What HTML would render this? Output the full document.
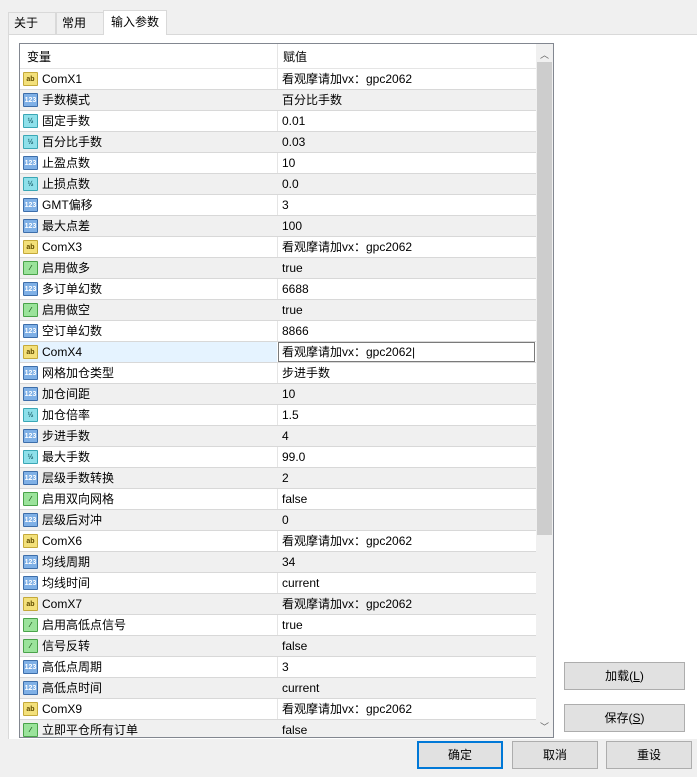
<!DOCTYPE html>
<html><head><meta charset="utf-8"><style>
*{box-sizing:border-box;margin:0;padding:0}
body{width:697px;height:777px;background:#f0f0f0;font-family:"Liberation Sans","Noto Sans CJK SC",sans-serif;font-size:12px;color:#000;position:relative;overflow:hidden}
.tab{position:absolute;top:12px;height:22px;border:1px solid #d9d9d9;border-bottom:none;background:#f0f0f0;padding:0 5px;line-height:21px;font-size:12px}
.panel{position:absolute;left:8px;top:34px;width:689px;height:705px;background:#fff;border-top:1px solid #d9d9d9;border-left:1px solid #d9d9d9}
.grid{position:absolute;left:19px;top:43px;width:535px;height:695px;border:1px solid #828790;background:#fff;overflow:hidden}
.hdr{position:absolute;left:0;top:0;width:516px;height:25px;border-bottom:1px solid #e5e5e5}
.hdr span{position:absolute;top:0;line-height:27px}
.row{position:absolute;left:0;width:516px;height:21px;border-bottom:1px solid #d8d8d8}
.row.g{background:#f0f0f0}
.row .n{position:absolute;left:22px;top:0;line-height:20px}
.row .v{position:absolute;left:262px;top:0;line-height:20px}
.row .ic{position:absolute;left:3px;top:3px;width:15px;height:14px;border-radius:1px;font-size:7px;line-height:13px;text-align:center;font-weight:bold}
.ab{background:#f3e07a;border:1px solid #c4a93a;color:#604c00}
.n1{background:#7fb0e6;border:1px solid #3d6eaa;color:#fff}
.hf{background:#8ee0ea;border:1px solid #3aa7b5;color:#1a5f6a}
.ch{background:#9be39b;border:1px solid #4aa34a;color:#145214}
.vline{position:absolute;left:257px;top:0;width:1px;height:695px;background:#e5e5e5}
.sb{position:absolute;left:516px;top:0;width:17px;height:693px;background:#f0f0f0}
.thumb{position:absolute;left:1px;top:18px;width:15px;height:473px;background:#cdcdcd}
.btn{position:absolute;height:28px;background:#e1e1e1;border:1px solid #adadad;text-align:center;line-height:26px;font-size:12px}
</style></head><body>
<div class="panel"></div>
<div class="tab" style="left:8px;width:48px">关于</div>
<div class="tab" style="left:56px;width:48px">常用</div>
<div class="tab" style="left:103px;top:10px;height:25px;width:64px;background:#fff;padding-left:7px;line-height:23px">输入参数</div>
<div class="grid">
<div class="hdr"><span style="left:7px">变量</span><span style="left:263px">赋值</span></div>
<div class="vline"></div>
<div id="rows"></div>
<div class="sb"><div style="position:absolute;left:4px;top:4px;font-size:9px;color:#606060">︿</div><div class="thumb"></div><div style="position:absolute;left:4px;top:676px;font-size:9px;color:#606060">﹀</div></div>
</div>
<div class="btn" style="left:564px;top:662px;width:121px">加载(<u>L</u>)</div>
<div class="btn" style="left:564px;top:704px;width:121px">保存(<u>S</u>)</div>
<div class="btn" style="left:417px;top:741px;width:86px;border:2px solid #0078d7;line-height:24px">确定</div>
<div class="btn" style="left:512px;top:741px;width:86px">取消</div>
<div class="btn" style="left:606px;top:741px;width:86px">重设</div>
<script>
var d=[["ab","ComX1","看观摩请加vx：gpc2062"],["n1","手数模式","百分比手数"],["hf","固定手数","0.01"],["hf","百分比手数","0.03"],["n1","止盈点数","10"],["hf","止损点数","0.0"],["n1","GMT偏移","3"],["n1","最大点差","100"],["ab","ComX3","看观摩请加vx：gpc2062"],["ch","启用做多","true"],["n1","多订单幻数","6688"],["ch","启用做空","true"],["n1","空订单幻数","8866"],["ab","ComX4","看观摩请加vx：gpc2062"],["n1","网格加仓类型","步进手数"],["n1","加仓间距","10"],["hf","加仓倍率","1.5"],["n1","步进手数","4"],["hf","最大手数","99.0"],["n1","层级手数转换","2"],["ch","启用双向网格","false"],["n1","层级后对冲","0"],["ab","ComX6","看观摩请加vx：gpc2062"],["n1","均线周期","34"],["n1","均线时间","current"],["ab","ComX7","看观摩请加vx：gpc2062"],["ch","启用高低点信号","true"],["ch","信号反转","false"],["n1","高低点周期","3"],["n1","高低点时间","current"],["ab","ComX9","看观摩请加vx：gpc2062"],["ch","立即平仓所有订单","false"]];
var t={ab:"ab",n1:"123",hf:"½",ch:"⁄"},h="";
d.forEach(function(r,i){var y=25+i*21;var sel=i==13;
h+='<div class="row'+(i%2?' g':'')+'" style="top:'+y+'px'+(sel?';background:linear-gradient(90deg,#e5f3ff 257px,#fff 257px)':'')+'"><div class="ic '+r[0]+'">'+t[r[0]]+'</div><span class="n">'+r[1]+'</span>'+(sel?'<div style="position:absolute;left:258px;top:0;width:257px;height:20px;border:1px solid #7a7a7a;background:#fff;padding:0 3px;line-height:18px">'+r[2]+'|</div>':'<span class="v">'+r[2]+'</span>')+'</div>';});
document.getElementById("rows").innerHTML=h;
</script>
</body></html>
